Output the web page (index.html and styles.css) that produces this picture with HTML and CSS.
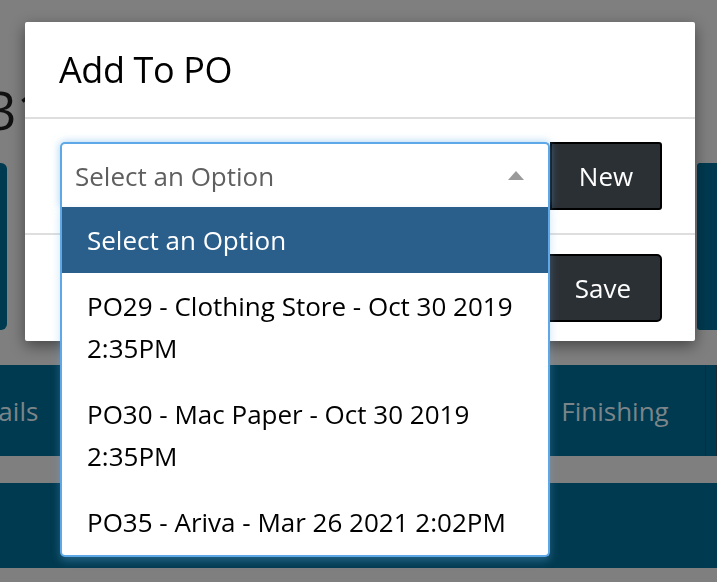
FILE: index.html
```html
<!DOCTYPE html>
<html lang="en">
<head>
<meta charset="utf-8">
<title>Add To PO</title>
<link rel="stylesheet" href="styles.css">
</head>
<body>
<div class="page">
  <header class="page-head">
    <h1 class="job-title">B31</h1>
  </header>
  <section class="summary">
    <div class="card card-left"></div>
    <div class="summary-mid"></div>
    <div class="card card-right"></div>
  </section>
  <nav class="tabs">
    <span class="tab">Details</span>
    <span class="tab"></span>
    <span class="tab"></span>
    <span class="tab"></span>
    <span class="tab">Finishing</span>
    <span class="tab"></span>
  </nav>
  <section class="content"></section>
</div>

<div class="modal" role="dialog" aria-labelledby="modal-title">
  <div class="modal-header">
    <h2 class="modal-title" id="modal-title">Add To PO</h2>
  </div>
  <div class="modal-body">
    <div class="input-group">
      <div class="select">
        <div class="select-box">
          <span class="placeholder">Select an Option</span>
          <span class="arrow"></span>
        </div>
        <ul class="dropdown">
          <li class="option option-active">Select an Option</li>
          <li class="option">PO29 - Clothing Store - Oct 30 2019 2:35PM</li>
          <li class="option">PO30 - Mac Paper - Oct 30 2019 2:35PM</li>
          <li class="option">PO35 - Ariva - Mar 26 2021 2:02PM</li>
        </ul>
      </div>
      <button class="btn btn-new" type="button">New</button>
    </div>
  </div>
  <div class="modal-footer">
    <button class="btn btn-save" type="button">Save</button>
  </div>
</div>
</body>
</html>
```

FILE: styles.css
```css
* {
  box-sizing: border-box;
  margin: 0;
  padding: 0;
}

html, body {
  height: 100%;
}

body {
  font-family: "Open Sans", "Noto Sans", sans-serif;
  background: #7f7f7f;
  overflow: hidden;
}

/* background page (dimmed behind the modal) */
.page {
  margin-left: -80px;
  width: 797px;
}

.page-head {
  height: 163px;
  padding: 83px 0 0 32px;
}

.job-title {
  font-size: 53px;
  line-height: 1;
  font-weight: 400;
  color: #111;
}

.summary {
  display: grid;
  grid-template-columns: 72px 1fr 20px;
  column-gap: 20px;
  padding-left: 15px;
  height: 167px;
}

.card {
  background: #003a50;
  border-radius: 6px;
}

.card-right {
  border-radius: 3px 0 0 3px;
}

.tabs {
  margin-top: 35px;
  height: 91px;
  display: grid;
  grid-template-columns: 155px 150px 150px 150px 181px 1fr;
  background: #003a50;
}

.tab {
  display: flex;
  align-items: center;
  justify-content: center;
  font-size: 26px;
  color: #7b8589;
  border-right: 1px solid #1b2833;
}

.content {
  margin-top: 27px;
  height: 85px;
  background: #003a50;
}

/* modal */
.modal {
  position: fixed;
  left: 25px;
  top: 22px;
  width: 670px;
  background: #fff;
  border-radius: 2px;
  box-shadow: 0 5px 15px rgba(0, 0, 0, 0.45);
}

.modal-header {
  height: 97px;
  padding: 0 34px;
  display: flex;
  align-items: center;
  border-bottom: 2px solid #dedede;
}

.modal-title {
  font-size: 36px;
  font-weight: 400;
  letter-spacing: -0.4px;
  color: #000;
}

.modal-body {
  padding: 23px 33px 23px 35px;
}

.input-group {
  display: flex;
  align-items: flex-start;
}

.select {
  position: relative;
  flex: 1;
  z-index: 2;
}

.select-box {
  height: 65px;
  display: flex;
  align-items: center;
  justify-content: space-between;
  padding: 0 24px 0 13px;
  background: #fff;
  border: 2px solid #5ea8e8;
  border-bottom: none;
  border-radius: 5px 5px 0 0;
  box-shadow: 0 0 9px rgba(102, 175, 233, 0.6);
  font-size: 26px;
  color: #5f5f5f;
}

.arrow {
  width: 0;
  height: 0;
  border-left: 8.5px solid transparent;
  border-right: 8.5px solid transparent;
  border-bottom: 9px solid #9a9a9a;
}

.dropdown {
  position: absolute;
  top: 100%;
  left: 0;
  right: 0;
  list-style: none;
  background: #fff;
  border: 2px solid #5ea8e8;
  border-top: none;
  border-radius: 0 0 5px 5px;
  box-shadow: 0 4px 9px rgba(102, 175, 233, 0.35);
}

.option {
  padding: 12px 24px 12px 25px;
  font-size: 26px;
  line-height: 42px;
  color: #000;
}

.option-active {
  background: #2a5f8c;
  color: #fff;
}

.btn {
  height: 68px;
  background: #2b3035;
  border: 2px solid #000;
  color: #fff;
  font-family: inherit;
  font-size: 26px;
  cursor: pointer;
}

.btn-new {
  width: 112px;
  border-radius: 0 3px 3px 0;
}

.modal-footer {
  display: flex;
  justify-content: flex-end;
  padding: 19px 33px 19px;
  border-top: 2px solid #dedede;
}

.btn-save {
  width: 118px;
  border-radius: 5px;
}
```
